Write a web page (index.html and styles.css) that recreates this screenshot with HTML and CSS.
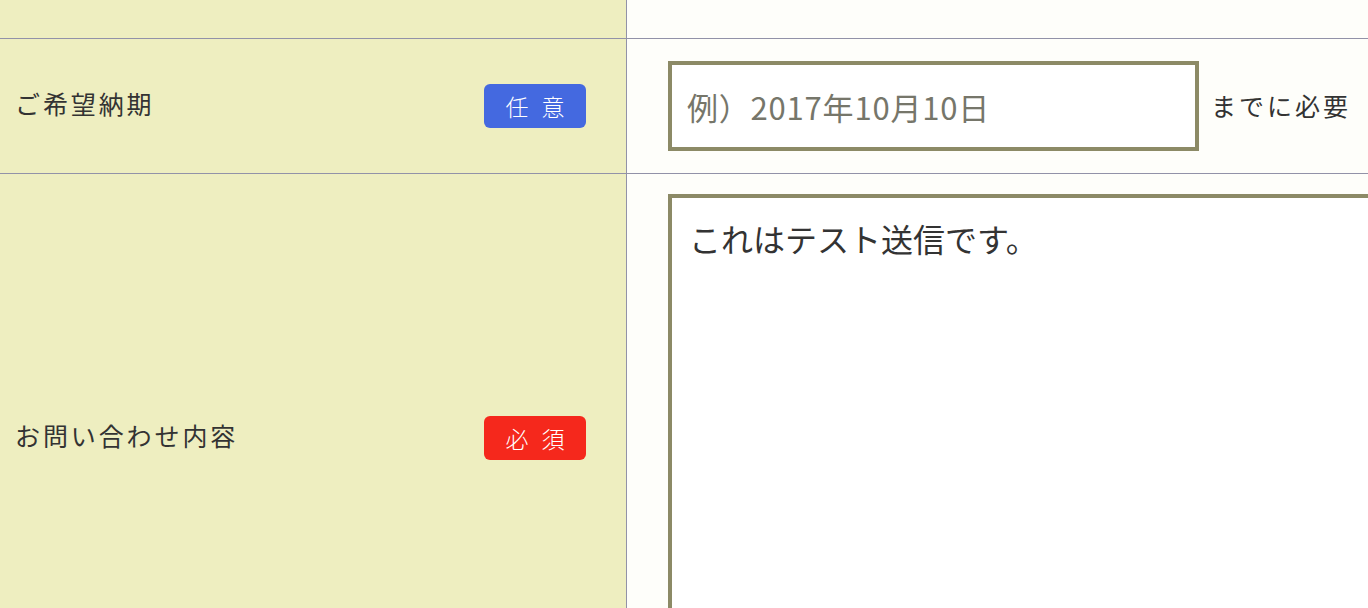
FILE: index.html
```html
<!DOCTYPE html>
<html lang="ja">
<head>
<meta charset="utf-8">
<title>お問い合わせ</title>
<link rel="stylesheet" href="styles.css">
</head>
<body>
<div class="form">
  <div class="row row-prev">
    <div class="head head-empty"></div>
    <div class="cell cell-empty"></div>
  </div>
  <div class="row row-date">
    <div class="head">
      <span class="label">ご希望納期</span>
      <span class="badge badge-opt">任 意</span>
    </div>
    <div class="cell cell-inline">
      <input class="input" type="text" placeholder="例）2017年10月10日">
      <span class="suffix">までに必要</span>
    </div>
  </div>
  <div class="row row-msg">
    <div class="head">
      <span class="label">お問い合わせ内容</span>
      <span class="badge badge-req">必 須</span>
    </div>
    <div class="cell cell-msg">
      <textarea class="textarea">これはテスト送信です。</textarea>
    </div>
  </div>
</div>
</body>
</html>
```

FILE: styles.css
```css
html, body {
  margin: 0;
  padding: 0;
}
body {
  width: 1368px;
  height: 608px;
  overflow: hidden;
  background: #fefefa;
  font-family: "Noto Sans CJK JP", "Noto Sans", sans-serif;
  color: #333333;
}
.form {
  width: 1560px;
  display: flex;
  flex-direction: column;
}
.row {
  display: grid;
  grid-template-columns: 627px 1fr;
  border-top: 1px solid #9292a8;
}
.row-prev {
  height: 38px;
  border-top: none;
}
.head {
  background: #eeeec0;
  border-right: 1px solid #9292a8;
  display: flex;
  align-items: center;
  justify-content: space-between;
  padding: 0 40px 0 15px;
}
.head-empty,
.cell-empty {
  padding: 0;
}
.label {
  font-size: 25px;
  letter-spacing: 2.9px;
  line-height: 1;
  padding-bottom: 5px;
}
.badge {
  width: 102px;
  height: 44px;
  border-radius: 6px;
  color: #ffffff;
  font-size: 23px;
  font-weight: 300;
  letter-spacing: 4px;
  padding-left: 4px;
  display: flex;
  align-items: center;
  justify-content: center;
  box-sizing: border-box;
}
.badge-opt {
  background: #4469e0;
}
.badge-req {
  background: #f5281c;
}
.cell {
  background: #fefefa;
  padding: 22px 0 22px 41px;
}
.cell-inline {
  display: flex;
  align-items: center;
  gap: 12px;
}
.input {
  width: 531px;
  height: 90px;
  box-sizing: border-box;
  border: 4px solid #8c8a66;
  background: #ffffff;
  padding: 0 15px;
  font-family: "Noto Sans CJK JP", "Noto Sans", sans-serif;
  font-size: 31px;
  letter-spacing: 0.8px;
  color: #333333;
  outline: none;
  margin: 0;
}
.input::placeholder {
  color: #76766a;
  opacity: 1;
}
.suffix {
  font-size: 25px;
  letter-spacing: 3px;
  padding-bottom: 2px;
}
.cell-msg {
  padding-top: 20px;
}
.textarea {
  display: block;
  width: 800px;
  height: 486px;
  box-sizing: border-box;
  border: 4px solid #8c8a66;
  background: #ffffff;
  padding: 16px 17px;
  font-family: "Noto Sans CJK JP", "Noto Sans", sans-serif;
  font-size: 32px;
  line-height: 1.5;
  color: #333333;
  resize: none;
  outline: none;
  margin: 0;
}
```
